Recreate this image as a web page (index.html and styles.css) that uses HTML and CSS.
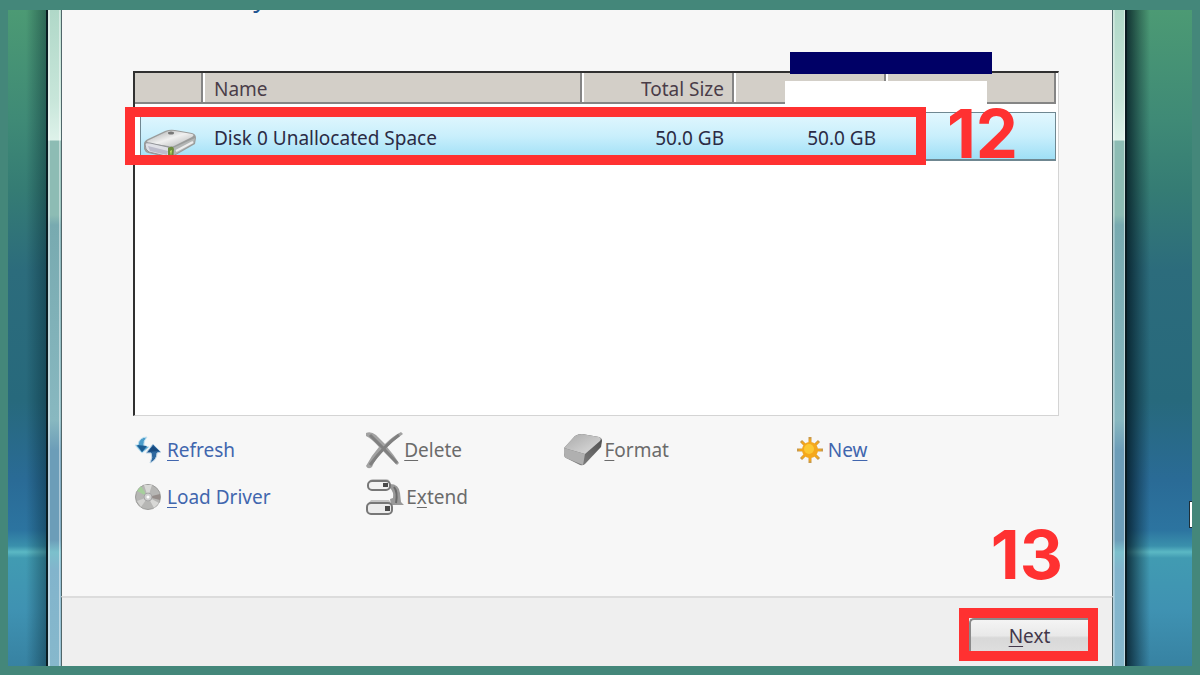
FILE: index.html
```html
<!DOCTYPE html>
<html lang="en">
<head>
    <meta charset="UTF-8">
    <meta name="viewport" content="width=device-width, initial-scale=1.0">
    <title>Install Windows</title>
    <link rel="stylesheet" href="styles.css">
</head>
<body>
    <div class="desktop">
        <main class="window">
            <section class="content">
                <h1>Where do you want to install Windows?</h1>

                <div class="disk-list">
                    <table>
                        <colgroup>
                            <col class="col-icon">
                            <col class="col-name">
                            <col class="col-size">
                            <col class="col-size">
                            <col class="col-type">
                        </colgroup>
                        <thead>
                            <tr>
                                <th></th>
                                <th>Name</th>
                                <th class="num">Total Size</th>
                                <th></th>
                                <th></th>
                            </tr>
                        </thead>
                        <tbody>
                            <tr>
                                <td class="icon-cell">
                                    <svg width="54" height="30" viewBox="0 0 54 30">
                                        <defs>
                                            <linearGradient id="top" x1="0" y1="0" x2="1" y2="1">
                                                <stop offset="0" stop-color="#a4a6a6"/>
                                                <stop offset=".5" stop-color="#f0f0f0"/>
                                                <stop offset="1" stop-color="#b0b2b2"/>
                                            </linearGradient>
                                        </defs>
                                        <path d="M1 17 Q1 14 5 12 L22 4 Q27 2 32 3 L49 6 Q53 7 53 11 L52 17 L31 29 Q28 31 24 30 L5 26 Q2 25 1 22 Z" fill="#9a9c9b"/>
                                        <path d="M4 14 L23 5 Q27 3 32 4 L49 7 Q52 8 49 10 L31 19 Q28 20 25 19 L5 16 Z" fill="url(#top)"/>
                                        <path d="M2 17 Q3 15 7 16 L25 20 Q28 21 28 25 L27 30 L6 25 Q2 23 2 17 Z" fill="#dfe0e6" stroke="#94969a"/>
                                        <path d="M5 19 L25 24 L24 28 L7 24 Z" fill="#bcbccb"/>
                                        <path d="M30 21 L52 11 L51 16 L31 28 Z" fill="#b3b6b5"/>
                                        <path d="M33 24 L50 15" stroke="#ededed" stroke-width="2"/>
                                        <ellipse cx="28" cy="6" rx="3" ry="1.5" fill="#777"/>
                                        <path d="M25 21 Q30 18 31 22 L30 30 L25 30 Z" fill="#6d8c3c"/>
                                        <path d="M27 24 L29 23 L28 29 Z" fill="#c3e06c"/>
                                    </svg>
                                </td>
                                <td>Disk 0 Unallocated Space</td>
                                <td class="num">50.0 GB</td>
                                <td class="num">50.0 GB</td>
                                <td></td>
                            </tr>
                        </tbody>
                    </table>
                    <div class="bar bar-navy"></div>
                    <div class="bar bar-white"></div>
                    <div class="row-highlight"></div>
                    <span class="step step-12">12</span>
                </div>

                <div class="actions">
                    <a class="action" href="#refresh">
                        <svg width="28" height="28" viewBox="0 0 28 28">
                            <path d="M13 1 Q5 1 4 9 L1 9 L8 17 L15 11 L10 10 Q9 5 13 1 Z" fill="#4c9dcb" stroke="#c4e2f1"/>
                            <path d="M3 9 L13 10 L8 16 Z" fill="#1d5c92"/>
                            <path d="M19 8 L27 16 L23 17 Q23 24 16 27 Q19 21 17 17 L12 17 Z" fill="#2e689f" stroke="#bfd5e6"/>
                            <path d="M19 10 L25 15 L14 16 Z" fill="#174a80"/>
                        </svg>
                        <span><u>R</u>efresh</span>
                    </a>
                    <button class="action" disabled>
                        <svg width="38" height="38" viewBox="0 0 38 38">
                            <path d="M1 2 Q6 0 11 4 L20 13 Q28 5 36 1 L38 3 Q29 9 22 16 Q29 24 34 32 L32 34 Q25 27 18 20 Q10 28 7 36 Q3 39 1 35 Q6 25 14 16 Q7 8 1 5 Z" fill="#a2a2a2"/>
                            <path d="M5 4 L18 17 L32 32 M34 4 Q20 14 5 34" fill="none" stroke="#808080" stroke-width="3"/>
                        </svg>
                        <span><u>D</u>elete</span>
                    </button>
                    <button class="action" disabled>
                        <svg width="40" height="34" viewBox="0 0 40 34">
                            <defs>
                                <linearGradient id="slab" x1="0" y1="0" x2="1" y2="1">
                                    <stop offset="0" stop-color="#a9a9a9"/>
                                    <stop offset="1" stop-color="#dedede"/>
                                </linearGradient>
                                <linearGradient id="slab-side" x1="0" y1="1" x2="1" y2="0">
                                    <stop offset="0" stop-color="#8c8c8c"/>
                                    <stop offset="1" stop-color="#4c4c4c"/>
                                </linearGradient>
                            </defs>
                            <path d="M1 15 L12 3 Q15 1 19 1 L36 4 Q39 5 39 8 L38 14 L22 31 Q20 33 17 32 L3 25 Q1 24 1 21 Z" fill="url(#slab-side)"/>
                            <path d="M1 15 L12 3 Q15 1 19 1 L36 4 Q39 5 37 8 L22 21 Z" fill="url(#slab)"/>
                            <path d="M1 15 L22 21 L20 32 L3 25 Q1 23 1 20 Z" fill="#b0b0b0"/>
                        </svg>
                        <span><u>F</u>ormat</span>
                    </button>
                    <a class="action" href="#new">
                        <svg width="26" height="26" viewBox="0 0 26 26">
                            <path d="M13 0 L13 26 M0 13 L26 13 M4 4 L22 22 M22 4 L4 22" stroke="#c99a4a" stroke-width="3"/>
                            <path d="M13 2 L13 24 M2 13 L24 13 M5 5 L21 21 M21 5 L5 21" stroke="#f2a51d" stroke-width="2"/>
                            <circle cx="13" cy="13" r="8" fill="#f5a81c"/>
                            <circle cx="12" cy="12" r="5" fill="#fcc833"/>
                        </svg>
                        <span>Ne<u>w</u></span>
                    </a>
                    <a class="action" href="#load-driver">
                        <svg width="28" height="28" viewBox="0 0 28 28">
                            <circle cx="14" cy="14" r="12.5" fill="#b6b6b4" stroke="#9c9c9a"/>
                            <path d="M14 14 L3 8 L7 3 Z" fill="#a6cf9c"/>
                            <path d="M14 14 L10 2 L18 2 Z M14 14 L25 20 L20 25 Z" fill="#d8d8d6"/>
                            <path d="M14 14 L26 11 L26 17 Z" fill="#958d8a"/>
                            <path d="M14 14 L3 18 L7 24 Z" fill="#d2d2d0"/>
                            <circle cx="14" cy="14" r="4" fill="#cfcfcf" stroke="#a5a5a5"/>
                            <circle cx="14" cy="14" r="1.5" fill="#fff"/>
                        </svg>
                        <span><u>L</u>oad Driver</span>
                    </a>
                    <button class="action" disabled>
                        <svg width="40" height="38" viewBox="0 0 40 38">
                            <path d="M25 6 Q34 6 35 15 L36 24 L39 27 L26 27 L25 21 L28 20 Q29 14 25 10 Z" fill="#999"/>
                            <path d="M29 9 Q33 14 31 25" fill="none" stroke="#6a6a6a" stroke-width="2"/>
                            <path d="M4 4 Q5 1 8 1 L21 1 Q24 1 25 4 Z M2 27 L6 22 L24 22 L27 27 Z" fill="#c4c4c4"/>
                            <rect x="3" y="3" width="22" height="9" rx="4" fill="#f2f2f2" stroke="#777" stroke-width="2"/>
                            <rect x="18" y="5" width="5" height="4" fill="#4a4a4a"/>
                            <rect x="2" y="25" width="25" height="11" rx="4" fill="#ececec" stroke="#777" stroke-width="2"/>
                            <rect x="20" y="28" width="5" height="5" fill="#4a4a4a"/>
                        </svg>
                        <span>E<u>x</u>tend</span>
                    </button>
                </div>
                <span class="step step-13">13</span>
            </section>

            <footer class="footer">
                <div class="next-highlight">
                    <button class="next"><u>N</u>ext</button>
                </div>
            </footer>
        </main>
        <div class="cursor"></div>
    </div>
</body>
</html>
```
FILE: styles.css
```css
* {
    box-sizing: border-box;
}
body {
    margin: 0;
    height: 100vh;
    display: flex;
    font-family: "Noto Sans", "Open Sans", sans-serif;
    font-size: 19px;
    color: #2b2b45;
    background: #44877a;
    padding: 10px 8px 9px;
}
.desktop {
    flex: 1;
    display: flex;
    position: relative;
    overflow: hidden;
    padding: 0 65px 0 38px;
    background:
        linear-gradient(to right, transparent 18px, rgba(0,30,40,0.4) 38px, transparent 38px),
        linear-gradient(to left, transparent 42px, rgba(0,20,30,0.3) 52px, rgba(0,20,30,0.75) 65px, transparent 65px),
        linear-gradient(#4c9a74 0, #3f8a76 110px, #357c74 180px, #2c6c7c 260px, #27697c 390px, #2a6b96 470px, #2c74a0 520px, #3a90ac 536px, #5bb8c4 542px, #419bb2 548px, #3f92b2 600px, #3782a2 100%);
}

/* glass window frame */
.window {
    flex: 1;
    display: flex;
    flex-direction: column;
    border: solid #0a1c22;
    border-width: 0 2px;
    padding: 0 12px 0 13px;
    background:
        linear-gradient(to right, rgba(255,255,255,0.5) 2px, transparent 2px, transparent 11px, rgba(255,255,255,0.6) 11px, transparent 13px),
        linear-gradient(to left, rgba(255,255,255,0.5) 1px, transparent 1px, transparent 10px, rgba(255,255,255,0.5) 11px, transparent 13px),
        linear-gradient(#b0d8c8 0, #c8e6da 90px, #def2ea 130px, #8dbcb4 131px, #8dbcb4 205px, #78aab0 215px, #88b8c0 410px, #6c9db8 440px, #6c9db8 530px, #7cc0cc 542px, #82b4cc 560px, #86b8cc 100%);
}
.content {
    flex: 1;
    position: relative;
    overflow: hidden;
    padding: 0 53px 0 71px;
    border: solid #50666a;
    border-width: 0 1px;
    background: #f7f7f7;
}
h1 {
    margin: -30px 0 56px;
    font-size: 25px;
    line-height: 35px;
    font-weight: normal;
    color: #1f5590;
}

.disk-list {
    position: relative;
    height: 345px;
    background: #fff;
    border: 1px solid #d4d4d4;
    border-top: 2px solid #303030;
    border-left: 2px solid #303030;
    padding-right: 2px;
}
table {
    width: 100%;
    table-layout: fixed;
    border-collapse: separate;
    border-spacing: 0;
}
.col-icon { width: 68px; }
.col-size { width: 152px; }
.col-type { width: 170px; }
th {
    height: 31px;
    padding: 3px 8px 0 11px;
    text-align: left;
    font-weight: normal;
    line-height: 26px;
    color: #4a3d48;
    background: #d3cfc8;
    border-right: 2px solid #858585;
    border-bottom: 2px solid #858585;
    box-shadow: inset 2px 0 #fff;
}
th:first-child { box-shadow: none; }
tbody::before {
    content: "";
    display: block;
    height: 8px;
}
td {
    height: 49px;
    padding: 3px 10px 0 11px;
    border: solid #6f8791;
    border-width: 1px 0 2px;
    background: linear-gradient(#e2f7fe, #c9effc 50%, #9fdff6);
}
td:last-child { border-right-width: 1px; }
th.num, td.num { text-align: right; }
td.icon-cell {
    padding: 11px 0 0 3px;
    border-left: 5px solid #fff;
    background-clip: padding-box;
    box-shadow: inset 1px 0 #6f8791;
}
.icon-cell svg { display: block; }

.bar {
    position: absolute;
    width: 202px;
}
.bar-navy {
    top: -21px;
    right: 66px;
    height: 22px;
    background: #000066;
}
.bar-white {
    top: 8px;
    right: 71px;
    height: 24px;
    background: #fff;
}
.row-highlight {
    position: absolute;
    top: 34px;
    left: -10px;
    right: 132px;
    height: 58px;
    border: 10px solid #ff3131;
}
.step {
    position: absolute;
    font-family: Inter, sans-serif;
    font-size: 67px;
    font-weight: 700;
    line-height: 68px;
    color: #ff3131;
}
.step-12 { top: 27px; right: 40px; }
.step-13 { right: 49px; bottom: 7px; }

.actions {
    display: grid;
    grid-template-columns: 231fr 198fr 233fr 263fr;
    grid-auto-rows: 38px;
    row-gap: 9px;
    margin-top: 15px;
}
.action {
    display: flex;
    align-items: center;
    gap: 5px;
    padding: 0 0 0 1px;
    border: none;
    background: none;
    font: inherit;
    color: #4166ae;
    text-decoration: none;
    justify-self: start;
}
.action:disabled {
    color: #6b6b6b;
    gap: 1px;
}
u { text-underline-offset: 3px; }

.footer {
    height: 70px;
    display: flex;
    justify-content: flex-end;
    align-items: flex-start;
    padding: 10px 14px 0 0;
    background: #efefef;
    border: 1px solid #50666a;
    border-top: 2px solid #dcdcdc;
    border-bottom: none;
}
.next-highlight {
    border: 10px solid #ff3131;
    width: 139px;
    background: #efefef;
}
.next {
    display: block;
    width: 100%;
    height: 33px;
    padding: 0;
    border: solid #8a8a8a;
    border-width: 2px 0 0 2px;
    border-radius: 5px 0 0 0;
    background: linear-gradient(#f4f4f4, #e9e9e9 50%, #d8d8d8 58%, #dedede);
    font: inherit;
    color: #43384a;
}
.cursor {
    position: absolute;
    top: 491px;
    right: 0;
    width: 3px;
    height: 27px;
    background: #fff;
    border: 1px solid #1d2f38;
    border-right: none;
}
```
